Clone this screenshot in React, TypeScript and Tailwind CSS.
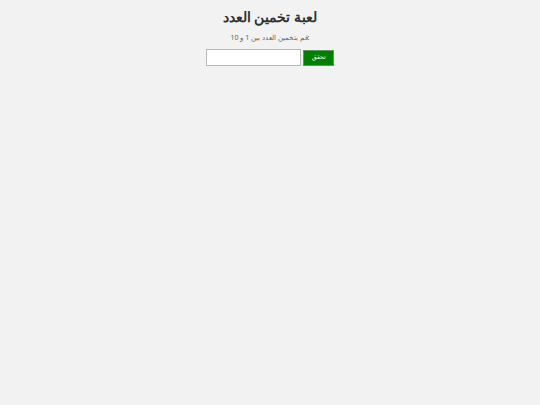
import React, { useState } from 'react';

const App: React.FC = () => {
  const [guess, setGuess] = useState('');

  return (
    <div className="min-h-screen w-full bg-[#f2f2f2] text-center font-['Noto_Sans',sans-serif]">
      <div className="pt-[8px]">
        <h1 className="text-[14px] font-bold text-[#333333] leading-[18px]">لعبة تخمين العدد</h1>
        <p className="mt-[7px] text-[7px] text-[#666666] leading-[10px]">قم بتخمين العدد بين 1 و 10:</p>
        <div className="mt-[6px] flex justify-center items-center gap-[2px]">
          <input
            type="text"
            value={guess}
            onChange={(e) => setGuess(e.target.value)}
            className="w-[95px] h-[17px] bg-white border border-[#bbbbbb] text-[8px] px-1 outline-none"
          />
          <button className="w-[31px] h-[16px] bg-[#007f00] text-white text-[6px] border border-[#5a9a5a]">
            تحقق
          </button>
        </div>
      </div>
    </div>
  );
};

export default App;
